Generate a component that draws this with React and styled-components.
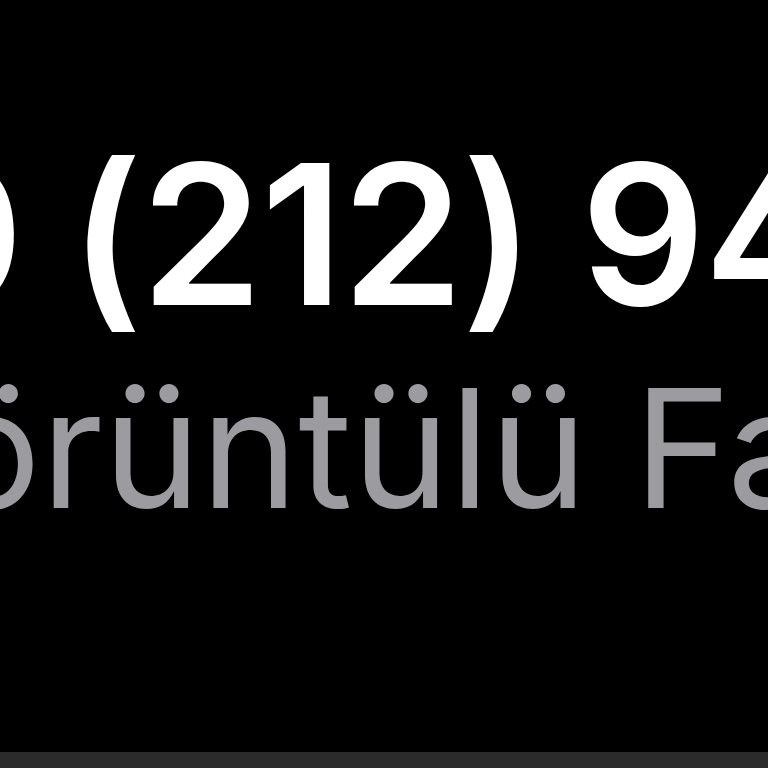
import React from 'react';
import styled, { createGlobalStyle } from 'styled-components';

const Global = createGlobalStyle`
  html, body {
    margin: 0;
    padding: 0;
    background: #000;
  }
`;

const Screen = styled.div`
  width: 768px;
  height: 768px;
  overflow: hidden;
  background: #000;
  display: flex;
  flex-direction: column;
  font-family: Inter, "Noto Sans", sans-serif;
`;

const Caller = styled.div`
  padding-top: 137px;
  display: flex;
  flex-direction: column;
  gap: 34px;
`;

const Number = styled.div`
  margin-left: ${p => p.offset}px;
  white-space: nowrap;
  font-size: 195px;
  line-height: 1;
  font-weight: 600;
  color: #fff;
  letter-spacing: -1.5px;
`;

const Label = styled.div`
  margin-left: ${p => p.offset}px;
  white-space: nowrap;
  font-size: 165px;
  line-height: 1;
  font-weight: 400;
  color: #9c9ca0;
`;

const HomeBar = styled.div`
  margin-top: auto;
  height: 16px;
  background: #2b2b2b;
`;

export default function App() {
  return (
    <>
      <Global />
      <Screen>
        <Caller>
          <Number offset={-105}>0 (212) 945 00 00</Number>
          <Label offset={-181}>Görüntülü FaceTime</Label>
        </Caller>
        <HomeBar />
      </Screen>
    </>
  );
}
